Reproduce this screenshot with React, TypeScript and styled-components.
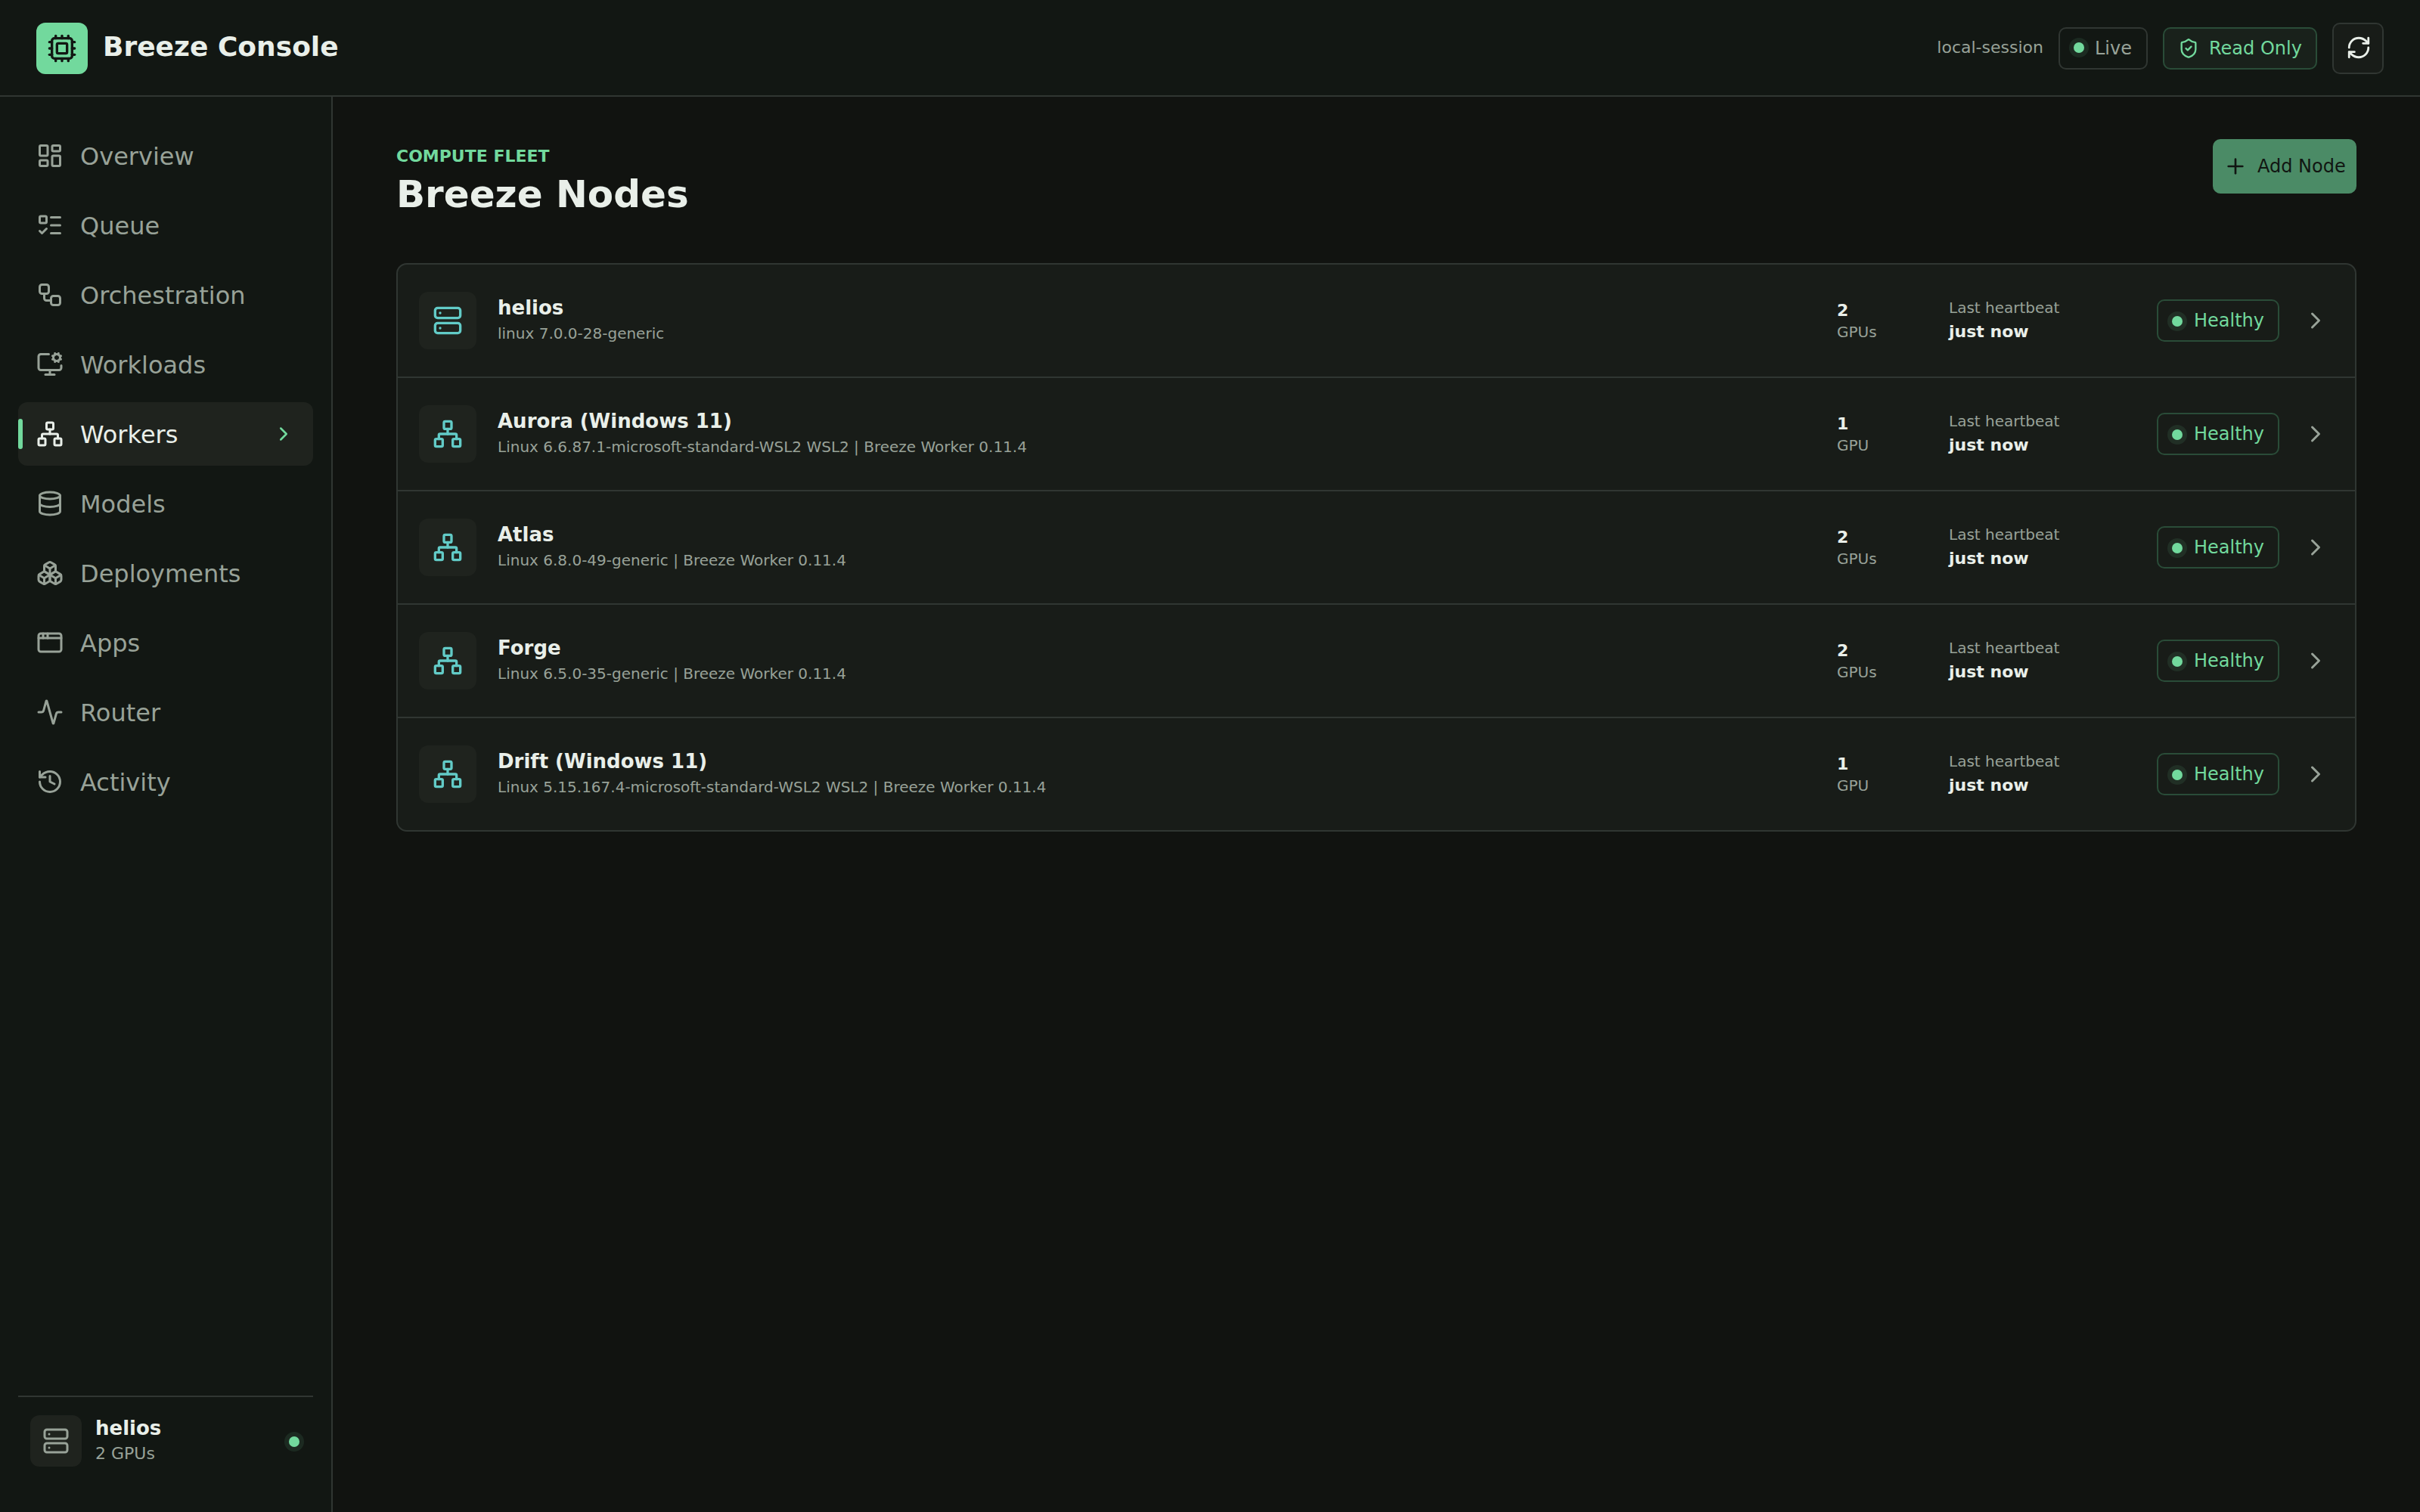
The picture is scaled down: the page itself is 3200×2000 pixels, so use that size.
import React from "react";
import styled, { createGlobalStyle, css } from "styled-components";
import {
  Activity,
  AppWindow,
  Boxes,
  ChevronRight,
  Cpu,
  Database,
  History,
  LayoutDashboard,
  ListTodo,
  LucideIcon,
  MonitorCog,
  Network,
  Plus,
  RefreshCw,
  Server,
  ShieldCheck,
  Workflow,
} from "lucide-react";

const c = {
  bg: "#111310",
  chrome: "#121713",
  surface: "#181c18",
  raised: "#1f231e",
  line: "#303632",
  text: "#e9efe9",
  muted: "#98a298",
  green: "#72d99d",
  greenLine: "#2a4c38",
  teal: "#62cbc7",
};

const GlobalStyle = createGlobalStyle`
  * { box-sizing: border-box; }
  body {
    margin: 0;
    background: ${c.bg};
    color: ${c.text};
    font-family: "DejaVu Sans", sans-serif;
  }
`;

const Shell = styled.div`
  display: grid;
  grid-template: 128px 1fr / 440px 1fr;
  width: 3200px;
  height: 2000px;
  overflow: hidden;
`;

const Header = styled.header`
  grid-column: 1 / -1;
  display: flex;
  align-items: center;
  justify-content: space-between;
  padding: 2px 48px 0;
  background: ${c.chrome};
  border-bottom: 2px solid ${c.line};
`;

const Brand = styled.div`
  display: flex;
  align-items: center;
  gap: 20px;
`;

const BrandMark = styled.div`
  display: grid;
  place-items: center;
  width: 68px;
  height: 68px;
  border-radius: 12px;
  background: ${c.green};
  color: ${c.chrome};
`;

const BrandName = styled.div`
  font-size: 36px;
  font-weight: 700;
  line-height: 42px;
  padding-bottom: 4px;
`;

const HeaderTools = styled.div`
  display: flex;
  align-items: center;
  gap: 20px;
`;

const Session = styled.span`
  font-size: 22px;
  line-height: 26px;
  padding-bottom: 2px;
  color: ${c.muted};
`;

type Tone = "plain" | "tinted" | "outline";

const pillGap: Record<Tone, number> = { plain: 14, tinted: 13, outline: 15 };

const Pill = styled.div<{ $tone: Tone; $width: number }>`
  display: flex;
  align-items: center;
  gap: ${(p) => pillGap[p.$tone]}px;
  width: ${(p) => p.$width}px;
  height: 56px;
  padding: 0 18px;
  border: 2px solid ${(p) => (p.$tone === "plain" ? c.line : c.greenLine)};
  border-radius: 10px;
  color: ${(p) => (p.$tone === "plain" ? c.muted : c.green)};
  font-size: 24px;
  line-height: 28px;
  white-space: nowrap;
  ${(p) => p.$tone === "tinted" && css`background: #19211b;`}
`;

const Dot = styled.span<{ $raised?: boolean }>`
  flex: none;
  width: 14px;
  height: 14px;
  margin: ${(p) => (p.$raised ? "0 0 2px" : "2px 0 0")};
  border-radius: 50%;
  background: ${c.green};
  box-shadow: 0 0 0 6px rgba(114, 217, 157, 0.1);
`;

const IconButton = styled.button`
  display: grid;
  place-items: center;
  width: 68px;
  height: 68px;
  padding: 0 0 2px 2px;
  border: 2px solid ${c.line};
  border-radius: 10px;
  background: ${c.surface};
  color: ${c.text};
`;

const Sidebar = styled.aside`
  display: flex;
  flex-direction: column;
  justify-content: space-between;
  padding: 36px 24px;
  background: ${c.chrome};
  border-right: 2px solid ${c.line};
`;

const Nav = styled.nav`
  display: flex;
  flex-direction: column;
  gap: 8px;
`;

const NavItem = styled.a<{ $active: boolean }>`
  position: relative;
  display: flex;
  align-items: center;
  gap: 22px;
  height: 84px;
  padding: 0 24px;
  border-radius: 12px;
  font-size: 32px;
  line-height: 38px;
  color: ${(p) => (p.$active ? c.text : c.muted)};
  ${(p) =>
    p.$active &&
    css`
      background: ${c.raised};
      &::before {
        content: "";
        position: absolute;
        left: 0;
        top: 22px;
        width: 6px;
        height: 40px;
        border-radius: 3px;
        background: ${c.green};
      }
    `}
`;

const NavLabel = styled.span`
  flex: 1;
  padding-top: 2px;
`;

const HostCard = styled.div`
  display: flex;
  align-items: center;
  gap: 18px;
  height: 118px;
  padding: 0 18px 0 16px;
  border-top: 2px solid ${c.line};
`;

const Tile = styled.div<{ $size: number; $color: string }>`
  display: grid;
  place-items: center;
  flex: none;
  width: ${(p) => p.$size}px;
  height: ${(p) => p.$size}px;
  border-radius: 12px;
  background: ${c.raised};
  color: ${(p) => p.$color};
`;

const HostText = styled.div`
  flex: 1;
`;

const HostMeta = styled.div`
  font-size: 22px;
  line-height: 34px;
  color: ${c.muted};
`;

const Main = styled.main`
  padding: 56px 84px;
`;

const PageHead = styled.div`
  display: flex;
  align-items: flex-start;
  justify-content: space-between;
  height: 164px;
`;

const Eyebrow = styled.div`
  padding-top: 9px;
  font-size: 22px;
  font-weight: 700;
  line-height: 28px;
  color: ${c.green};
`;

const PageTitle = styled.h1`
  margin: 6px 0 0;
  font-size: 50px;
  font-weight: 700;
  line-height: 60px;
`;

const AddButton = styled.button`
  display: flex;
  align-items: center;
  gap: 13px;
  width: 190px;
  height: 72px;
  padding: 0 14px;
  border: 0;
  border-radius: 10px;
  background: #4b8b66;
  color: #111612;
  font: 24px/28px "DejaVu Sans", sans-serif;
  white-space: nowrap;
`;

const Panel = styled.section`
  border: 2px solid ${c.line};
  border-radius: 14px;
  background: ${c.surface};
  overflow: hidden;
`;

const NodeRow = styled.div`
  display: grid;
  grid-template-columns: 76px 1fr 120px 247px 162px 44px;
  column-gap: 28px;
  align-items: center;
  box-sizing: content-box;
  height: 148px;
  padding: 0 28px;
  & + & {
    border-top: 2px solid ${c.line};
  }
`;

const NodeName = styled.div`
  font-size: 26px;
  font-weight: 700;
  line-height: 34px;
`;

const NodeMeta = styled.div`
  font-size: 20px;
  line-height: 34px;
  color: ${c.muted};
`;

const GpuCell = styled.div`
  padding-top: 2px;
`;

const Count = styled.div`
  font-size: 22px;
  font-weight: 700;
  line-height: 28px;
`;

const Small = styled.div`
  font-size: 20px;
  line-height: 28px;
  color: ${c.muted};
`;

const Beat = styled.div`
  margin-top: 2px;
  font-size: 22px;
  font-weight: 700;
  line-height: 32px;
`;

const RowArrow = styled.div`
  display: flex;
  padding-left: 2px;
  color: ${c.muted};
`;

const navItems: { label: string; icon: LucideIcon; active?: boolean }[] = [
  { label: "Overview", icon: LayoutDashboard },
  { label: "Queue", icon: ListTodo },
  { label: "Orchestration", icon: Workflow },
  { label: "Workloads", icon: MonitorCog },
  { label: "Workers", icon: Network, active: true },
  { label: "Models", icon: Database },
  { label: "Deployments", icon: Boxes },
  { label: "Apps", icon: AppWindow },
  { label: "Router", icon: Activity },
  { label: "Activity", icon: History },
];

const nodes = [
  { name: "helios", meta: "linux 7.0.0-28-generic", gpus: 2, local: true },
  { name: "Aurora (Windows 11)", meta: "Linux 6.6.87.1-microsoft-standard-WSL2 WSL2 | Breeze Worker 0.11.4", gpus: 1 },
  { name: "Atlas", meta: "Linux 6.8.0-49-generic | Breeze Worker 0.11.4", gpus: 2 },
  { name: "Forge", meta: "Linux 6.5.0-35-generic | Breeze Worker 0.11.4", gpus: 2 },
  { name: "Drift (Windows 11)", meta: "Linux 5.15.167.4-microsoft-standard-WSL2 WSL2 | Breeze Worker 0.11.4", gpus: 1 },
];

export default function App() {
  return (
    <>
      <GlobalStyle />
      <Shell>
        <Header>
          <Brand>
            <BrandMark>
              <Cpu size={40} />
            </BrandMark>
            <BrandName>Breeze Console</BrandName>
          </Brand>
          <HeaderTools>
            <Session>local-session</Session>
            <Pill $tone="plain" $width={118}>
              <Dot $raised />
              Live
            </Pill>
            <Pill $tone="tinted" $width={204}>
              <ShieldCheck size={28} />
              Read Only
            </Pill>
            <IconButton aria-label="Refresh">
              <RefreshCw size={34} />
            </IconButton>
          </HeaderTools>
        </Header>
        <Sidebar>
          <Nav>
            {navItems.map(({ label, icon: Icon, active }) => (
              <NavItem key={label} $active={!!active}>
                <Icon size={36} />
                <NavLabel>{label}</NavLabel>
                {active && <ChevronRight size={30} color={c.green} />}
              </NavItem>
            ))}
          </Nav>
          <HostCard>
            <Tile $size={68} $color={c.muted}>
              <Server size={36} />
            </Tile>
            <HostText>
              <NodeName>helios</NodeName>
              <HostMeta>2 GPUs</HostMeta>
            </HostText>
            <Dot />
          </HostCard>
        </Sidebar>
        <Main>
          <PageHead>
            <div>
              <Eyebrow>COMPUTE FLEET</Eyebrow>
              <PageTitle>Breeze Nodes</PageTitle>
            </div>
            <AddButton>
              <Plus size={32} />
              Add Node
            </AddButton>
          </PageHead>
          <Panel>
            {nodes.map((n) => (
              <NodeRow key={n.name}>
                <Tile $size={76} $color={c.teal}>
                  {n.local ? <Server size={40} /> : <Network size={40} />}
                </Tile>
                <div>
                  <NodeName>{n.name}</NodeName>
                  <NodeMeta>{n.meta}</NodeMeta>
                </div>
                <GpuCell>
                  <Count>{n.gpus}</Count>
                  <Small>{n.gpus === 1 ? "GPU" : "GPUs"}</Small>
                </GpuCell>
                <div>
                  <Small>Last heartbeat</Small>
                  <Beat>just now</Beat>
                </div>
                <Pill $tone="outline" $width={162}>
                  <Dot />
                  Healthy
                </Pill>
                <RowArrow>
                  <ChevronRight size={36} />
                </RowArrow>
              </NodeRow>
            ))}
          </Panel>
        </Main>
      </Shell>
    </>
  );
}
